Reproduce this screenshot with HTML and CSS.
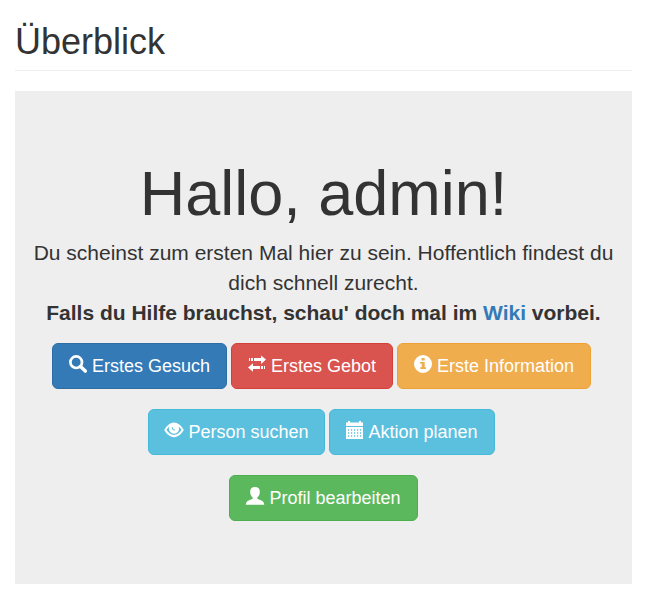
FILE: index.html
```html
<!DOCTYPE html>
<html lang="de">
<head>
<meta charset="utf-8">
<title>Überblick</title>
<link rel="stylesheet" href="styles.css">
</head>
<body>
<main class="container">
<div class="page-header"><h1>Überblick</h1></div>
<section class="jumbotron">
<h1>Hallo, admin!</h1>
<p>Du scheinst zum ersten Mal hier zu sein. Hoffentlich findest du dich schnell zurecht.<br><strong>Falls du Hilfe brauchst, schau' doch mal im <a href="#">Wiki</a> vorbei.</strong></p>
<div class="row">
<a class="btn primary" href="#"><svg class="icon" viewBox="0 0 18 18"><circle cx="7.2" cy="7.2" r="5.8" fill="none" stroke="currentColor" stroke-width="2.7"/><path d="M11.5 11.5l4.800 4.600" stroke="currentColor" stroke-width="3.500" stroke-linecap="round"/></svg> Erstes Gesuch</a>
<a class="btn danger" href="#"><svg class="icon" viewBox="0 0 18 18"><path d="M1 3h1v3H1zM3 3h2v3H3zM6 3h7V.5l5 4-5 4.500V6H6zM17 11h-1v3h1zM15 11h-2v3h2zM12 11H5V8.200L0 12.500l5 4.200V14h7z"/></svg> Erstes Gebot</a>
<a class="btn warning" href="#"><svg class="icon" viewBox="0 0 18 18"><path fill-rule="evenodd" d="M9 0a9 9 0 1 0 0 18A9 9 0 0 0 9 0zM7.500 3h3.200v2.500H7.500zM6.200 7h4.500v5.200H12V14H6.200v-1.800h1.500V8.800H6.200z"/></svg> Erste Information</a>
</div>
<div class="row">
<a class="btn info" href="#"><svg class="icon" viewBox="0 0 18 18"><path d="M-.8 9Q3.500 1.500 9 1.500T18.800 9Q14.500 16.300 9 16.300T-.8 9z"/><path class="gap" d="M1.500 9Q2.500 6.800 4.500 5.400A5 5 0 0 0 9 12.700A5 5 0 0 0 13.500 5.400Q15.500 6.800 16.500 9Q13 13.900 9 13.900T1.500 9z"/><path class="glint" d="M7.200 6.200Q6.800 9.300 9.800 9"/></svg> Person suchen</a>
<a class="btn info" href="#"><svg class="icon" viewBox="0 0 18 18"><path d="M2 0h2v2H2zM13 0h2v2h-2zM0 1.500h17V5H0zM0 6h17v12H0z"/><path class="dots" d="M2 9h13.500M2 12h13.500M2 15h13.500"/></svg> Aktion planen</a>
</div>
<div class="row last">
<a class="btn success" href="#"><svg class="icon" viewBox="0 0 18 18"><path d="M9 0C5.500 0 4 2 4.200 5c.1 3 1 4 2.500 5.500v1.200L2 13.700Q0 14.700-.3 17.700h18.600Q18 14.700 16 13.700l-4.700-2v-1.200C12.800 9 13.700 8 13.800 5 14 2 12.500 0 9 0z"/></svg> Profil bearbeiten</a>
</div>
</section>
</main>
</body>
</html>
```
FILE: styles.css
```css
* { box-sizing: border-box; }
body { margin: 0; font: 14px/20px "Liberation Sans", Arial, sans-serif; color: #333; background: #fff; }
.container { width: 617px; margin-left: 15px; padding-top: 22px; }
.page-header { height: 49px; margin-bottom: 20px; border-bottom: 1px solid #eee; }
h1 { margin: 0; font-weight: 500; }
.page-header h1 { font-size: 36px; line-height: 39.6px; }
.jumbotron { height: 493px; padding: 68px 15px 0; background: #eee; text-align: center; }
.jumbotron h1 { font-size: 63px; line-height: 69px; margin-bottom: 10px; }
.jumbotron p { margin: 0 0 15px; font-size: 21px; line-height: 30px; }
a { color: #337ab7; text-decoration: none; }
.row { display: flex; justify-content: center; gap: 4px; margin-bottom: 20px; padding-right: 4px; }
.row.last { padding-right: 0; }
.btn { height: 46px; padding: 10px 16px; border: 1px solid; border-radius: 6px; font-size: 18px; line-height: 24px; color: #fff; white-space: nowrap; }
.primary { background: #337ab7; border-color: #2e6da4; }
.danger { background: #d9534f; border-color: #d43f3a; }
.warning { background: #f0ad4e; border-color: #eea236; }
.info { background: #5bc0de; border-color: #46b8da; }
.success { background: #5cb85c; border-color: #4cae4c; }
.icon { width: 18px; height: 18px; fill: currentColor; vertical-align: -1px; overflow: visible; }
.gap { fill: #5bc0de; }
.glint { fill: none; stroke: #5bc0de; stroke-width: 1; }
.dots { fill: none; stroke: #5bc0de; stroke-width: 1.3; stroke-dasharray: 1.2 1.8; }
```
